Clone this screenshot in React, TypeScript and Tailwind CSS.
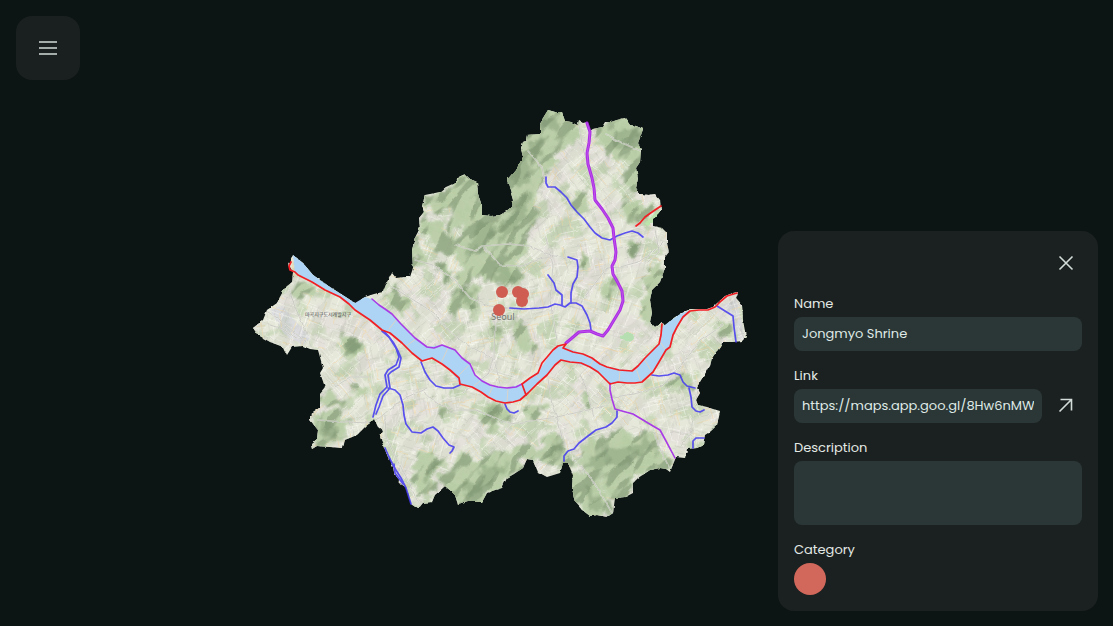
import { useState } from "react";

const BOUNDARY =
  "M548 110L555 112L562 112L565 121L571 122L577 125L578 120L583 123L587 122L590 131L593 129L602 127L605 122L611 122L617 120L625 118L630 125L636 126L643 129L641 135L638 143L641 150L640 162L636 168L638 178L636 188L640 194L648 195L655 194L660 200L661 210L653 220L653 226L662 228L667 233L667 243L669 252L665 257L665 268L660 282L652 290L650 300L652 313L650 322L655 327L662 322L665 326L672 319L680 314L690 309L707 309L713 307L725 296L733 293L738 292L736 298L742 305L743 320L746 337L742 341L733 342L722 342L720 347L712 358L710 366L703 377L697 387L700 393L696 400L698 405L707 407L713 409L720 411L717 425L711 431L705 435L703 445L697 448L687 449L685 458L676 457L670 472L666 469L660 468L650 470L638 478L633 483L633 493L625 497L615 498L613 513L607 517L598 515L590 516L582 510L575 502L572 488L573 475L568 463L563 463L560 473L547 477L538 472L533 460L527 459L523 468L514 474L507 478L502 488L495 490L487 493L482 502L468 502L458 505L455 495L451 491L445 486L435 495L432 502L423 503L418 509L411 504L407 488L401 484L395 477L393 467L388 457L380 437L383 431L378 427L374 419L370 423L366 426L357 435L345 440L343 448L330 447L317 446L312 449L311 445L317 440L318 430L310 420L310 415L320 408L320 393L325 387L320 373L323 368L318 350L310 349L303 346L292 347L287 355L283 347L270 342L258 335L253 328L263 320L267 310L277 303L280 297L285 288L292 282L293 272L288 264L293 255L303 263L313 275L330 287L355 303L365 297L374 294L383 292L387 282L392 273L396 278L405 277L410 277L413 268L412 250L415 238L420 228L419 218L424 212L422 206L425 195L440 192L446 187L455 183L461 176L465 174L470 179L477 182L478 195L482 205L482 215L491 216L500 215L512 208L513 200L510 190L507 180L517 168L523 157L521 149L523 142L526 141L527 135L540 134L540 123Z";

const RIVERS = [
  "M293 255L303 263L313 275L330 287L355 303L365 297L374 300L385 309L400 322L415 338L427 347L442 345L455 350L462 358L470 363L475 375L490 385L507 388L522 384L538 373L548 357L558 346L566 347L580 353L590 357L607 367L632 371L643 360L660 343L662 327L680 314L690 310L677 327L670 347L660 360L653 372L642 382L627 383L610 383L603 377L590 367L570 362L560 361L547 375L528 393L520 400L505 403L488 397L472 387L460 384L450 370L443 365L432 358L422 361L400 342L390 333L382 330L355 310L340 297L312 282L295 272Z",
];

const HILLS = [
  "M538 104L565 104L576 124L577 142L561 150L552 160L544 174L538 190L536 211L528 236L520 260L516 290L500 280L486 284L478 276L466 288L456 277L460 262L450 250L458 234L478 216L498 212L510 206L500 180L518 155L518 136L536 129Z",
  "M456 174L468 168L482 182L487 218L477 224L463 233L450 224L453 208L448 192Z",
  "M424 196L448 190L452 202L440 211L424 210Z",
  "M418 213L436 217L452 238L459 252L449 260L436 246L420 236Z",
  "M410 240L420 246L424 262L414 270Z",
  "M594 128L611 118L630 115L647 128L643 150L645 167L638 192L626 184L628 160L615 160L607 150L598 144Z",
  "M630 200L652 203L657 214L648 228L635 224L622 215Z",
  "M575 192L588 193L590 208L579 214L572 203Z",
  "M583 252L592 257L587 270L576 269Z",
  "M628 240L640 242L636 255L625 251Z",
  "M662 258L662 283L655 296L655 325L642 323L637 311L645 296L648 274Z",
  "M607 281L614 285L607 297L601 293Z",
  "M460 280L478 289L474 312L462 310L452 316L452 295Z",
  "M440 266L450 268L452 280L442 284Z",
  "M515 322L528 330L532 352L521 347L510 335Z",
  "M490 318L500 326L496 340L488 330Z",
  "M394 304L384 293L391 286L401 294L410 303L407 315L395 311Z",
  "M297 280L310 278L316 291L303 301L293 294Z",
  "M341 333L357 337L362 351L350 359L344 348Z",
  "M324 389L337 392L344 410L330 410L318 402Z",
  "M349 382L364 386L355 398Z",
  "M325 411L349 418L343 441L316 446L311 418Z",
  "M483 408L500 402L510 412L501 428L486 426L473 418Z",
  "M434 402L443 404L451 413L441 419Z",
  "M420 456L436 448L441 463L437 486L419 498L412 477L417 465Z",
  "M450 464L462 452L476 462L495 453L516 453L520 469L508 480L504 490L486 497L480 506L457 508L451 492L440 480Z",
  "M520 440L535 448L548 436L566 440L569 461L549 467L530 462L508 456L515 446Z",
  "M566 464L581 450L594 439L613 434L637 431L654 438L665 452L670 468L644 472L633 484L627 499L609 499L601 481L581 463Z",
  "M570 476L590 468L602 486L613 516L593 520L571 502Z",
  "M677 375L690 376L698 391L682 395L668 387Z",
  "M718 321L730 322L733 339L716 341Z",
  "M532 405L544 410L536 421L527 414Z",
  "M586 389L592 398L586 404L580 399Z",
];

const SHADOWS = [
  "M512 172L531 156L528 182L517 189Z",
  "M508 216L531 190L527 216L506 238L495 250L498 230Z",
  "M542 114L553 111L562 119L556 138L544 131Z",
  "M528 142L545 138L541 156L532 160Z",
  "M609 137L622 130L637 128L631 146L618 151Z",
  "M474 233L485 222L496 224L482 249L465 260Z",
  "M580 470L607 450L633 445L648 440L644 454L621 461L598 470Z",
  "M586 486L603 497L603 513L590 507Z",
  "M460 483L473 480L485 470L504 459L503 474L484 488L465 498Z",
  "M484 416L496 406L502 414L492 422Z",
  "M426 469L434 459L439 474L427 483Z",
  "M490 276L502 264L512 280L500 288Z",
  "M544 451L558 441L565 450L553 457Z",
  "M462 290L472 290L472 305L462 304Z",
  "M326 419L338 425L334 437L322 434Z",
  "M443 268L449 270L448 282L442 278Z",
  "M345 340L356 338L358 350L350 354Z",
  "M629 243L638 243L634 253L627 251Z",
  "M582 255L590 258L584 269L578 268Z",
];

const MAIN_ROADS = [
  "M392 287L412 299L434 313L447 329L464 343L493 359L488 374L463 393",
  "M495 315L494 359L500 384",
  "M415 260L433 265L455 280L470 298L489 306L520 309",
  "M456 245L475 251L482 246L508 244L530 246L548 254L566 259",
  "M606 134L622 143L641 151",
  "M579 125L582 143L588 168L592 190",
  "M581 302L593 286L607 268L620 267L638 262L651 254L663 242",
  "M528 151L542 167L545 185",
  "M371 425L390 409L407 397L427 388",
  "M385 415L386 437L396 458L409 482L417 501",
  "M318 420L343 422L371 423",
  "M289 289L295 307L307 334",
  "M268 312L279 319L295 333L306 342",
  "M270 325L283 329L298 339",
  "M548 379L552 405L558 420L562 438",
  "M580 374L587 390L594 417",
  "M573 459L585 470L598 489L612 513",
  "M654 433L660 449L669 467",
  "M698 388L694 414L690 434L681 446",
  "M607 398L634 394L662 386L680 367L700 341L723 325",
  "M424 392L438 404L455 410L476 410L510 424L557 417L605 406",
  "M655 229L659 252L648 262",
  "M335 387L350 377L371 377",
  "M546 238L553 265L550 300L557 340",
  "M484 247L500 265L521 266L543 258",
];

const BLUE_STREAMS = [
  "M546 177L546 183L548 187L555 187L561 192L567 198L571 205L577 212L584 219L590 227L595 233L602 238L610 240L617 236L625 233L632 231L638 233L643 237",
  "M510 308L524 309L539 308L548 307L555 304L560 305L565 307L570 303L576 303L582 306L587 315L590 323L591 330",
  "M571 303L571 293L573 284L577 277L578 267L577 260L568 257",
  "M562 305L562 295L556 290L554 283L548 275",
  "M382 331L389 337L396 348L399 357L396 365L388 370L385 375L387 387L380 394L376 405L373 417",
  "M384 331L393 342L398 351L401 358L399 367L391 372L388 375L390 388L383 396L379 407L376 414",
  "M388 388L395 390L400 395L403 405L404 415L406 424L412 432L421 433L427 429L433 427L438 431L443 438L449 445L454 447L452 451L450 453",
  "M421 362L425 372L430 380L436 386L444 388L453 388L460 385",
  "M385 448L389 457L394 467L401 478L406 488L411 504",
  "M394 464L395 473L403 484",
  "M505 404L507 409L510 412L514 413L518 411",
  "M564 461L564 456L568 451L574 449L579 443L588 436L596 430L606 427L612 423L617 417L617 411",
  "M652 375L659 376L668 375L674 373L680 375L683 382L687 386L695 388",
  "M689 388L691 397L692 407L696 411L700 412L704 410",
  "M693 448L693 441L696 438L704 438",
  "M717 306L725 311L733 316L734 327L736 342",
];

const MAIN_TRIBUTARY =
  "M587 123L590 132L589 143L587 153L588 164L592 178L594 188L595 200L602 209L608 218L613 228L614 238L616 252L615 260L612 266L613 274L618 283L622 291L623 301L620 310L614 320L608 330L603 336L597 334L590 331L579 332L572 338L566 343";

const PURPLE_STREAMS = [
  "M610 383L610 390L612 399L615 409L622 411L633 414L643 420L653 426L660 430L666 441L675 458",
  "M372 299L379 305L385 309L392 314L401 324L415 338L427 347L434 348L442 345L455 350L462 358L470 364L475 375L482 381L490 385L498 387L507 388L516 387L522 384",
];

const RED_BANKS = [
  "M291 262L289 266L290 270L295 272L298 275L312 282L325 290L340 297L349 304L355 310L370 320L382 330L390 333L402 343L412 353L422 361L432 358L442 364L450 370L459 378L460 384L472 387L481 392L488 397L496 401L505 403L513 402L520 400L528 393L537 384L547 375L555 365L561 360L570 362L581 363L590 367L598 372L604 378L610 384L618 382L627 383L635 383L642 382L653 372L659 362L666 350L670 347L673 335L677 327L683 317L690 311L699 310L708 310L715 307L721 301L727 296L737 293",
  "M526 395L522 384L530 378L538 373L542 363L548 356L553 350L558 346L566 344L563 348L573 352L583 354L592 358L600 364L607 367L619 370L632 371L638 366L645 358L653 350L659 344L661 335L662 324",
  "M636 226L640 223L645 217L652 212L661 206",
];

const MARKERS = [
  { x: 502, y: 292 },
  { x: 518, y: 292 },
  { x: 523, y: 294 },
  { x: 522, y: 301 },
  { x: 499, y: 310 },
];

/** Short street segments on a slightly jittered, slanted grid. */
function streets(step: number, seed: number) {
  let s = seed;
  const next = () => {
    s = (s * 16807) % 2147483647;
    return s / 2147483647;
  };
  let d = "";
  for (let y = 110; y < 520; y += step) {
    for (let x = 250; x < 750; x += step) {
      const px = x + next() * step;
      const py = y + next() * step;
      const len = 6 + next() * 16;
      const a = (Math.floor(x / 90) + Math.floor(y / 70)) * 0.5 + (next() > 0.5 ? Math.PI / 2 : 0);
      d += `M${px.toFixed(1)} ${py.toFixed(1)}l${(Math.cos(a) * len).toFixed(1)} ${(Math.sin(a) * len).toFixed(1)}`;
    }
  }
  return d;
}

const MINOR = streets(10, 71);
const LIGHT = streets(9, 4021);
const WARM = streets(16, 913);

function SeoulMap() {
  return (
    <svg
      className="absolute inset-0 h-full w-full"
      viewBox="0 0 1113 626"
      preserveAspectRatio="xMidYMid slice"
      role="img"
      aria-label="Map of Seoul"
      fill="none"
      strokeLinejoin="round"
      strokeLinecap="round"
    >
      <defs>
        <clipPath id="city">
          <path d={BOUNDARY} />
        </clipPath>
        <filter id="rough" x="-5%" y="-5%" width="110%" height="110%" colorInterpolationFilters="sRGB">
          <feTurbulence type="fractalNoise" baseFrequency="0.07" numOctaves="3" seed="4" result="n" />
          <feDisplacementMap in="SourceGraphic" in2="n" scale="22" xChannelSelector="R" yChannelSelector="G" />
          <feGaussianBlur stdDeviation="1.1" />
        </filter>
        <filter id="edge" x="-5%" y="-5%" width="110%" height="110%" colorInterpolationFilters="sRGB">
          <feTurbulence type="fractalNoise" baseFrequency="0.16" numOctaves="2" seed="9" result="n" />
          <feDisplacementMap in="SourceGraphic" in2="n" scale="3" xChannelSelector="R" yChannelSelector="G" />
          <feGaussianBlur stdDeviation="0.4" />
        </filter>
        <filter id="patches" x="0" y="0" width="100%" height="100%" colorInterpolationFilters="sRGB">
          <feTurbulence type="fractalNoise" baseFrequency="0.05" numOctaves="3" seed="12" />
          <feColorMatrix values="0 0 0 0 0.74  0 0 0 0 0.82  0 0 0 0 0.67  7 0 0 0 -3.7" />
        </filter>
        <filter id="tint" x="0" y="0" width="100%" height="100%" colorInterpolationFilters="sRGB">
          <feTurbulence type="fractalNoise" baseFrequency="0.035" numOctaves="2" seed="31" />
          <feColorMatrix values="0 0 0 0 0.89  0 0 0 0 0.87  0 0 0 0 0.86  0 6 0 0 -2.8" />
        </filter>
        <filter id="relief" x="0" y="0" width="100%" height="100%" colorInterpolationFilters="sRGB">
          <feTurbulence type="fractalNoise" baseFrequency="0.03 0.065" numOctaves="2" seed="7" />
          <feColorMatrix values="0 0 0 0 0  0 0 0 0 0  0 0 0 0 0  1 0 0 0 0" />
          <feGaussianBlur stdDeviation="0.8" />
          <feDiffuseLighting surfaceScale="26" diffuseConstant="1.15" lightingColor="#ffffff">
            <feDistantLight azimuth="260" elevation="55" />
          </feDiffuseLighting>
          <feColorMatrix values="0 0 0 0 0.42  0 0 0 0 0.5  0 0 0 0 0.38  -1.6 0 0 0 1.4" />
        </filter>
        <mask id="hillMask">
          <g fill="#ffffff" filter="url(#rough)">
            {HILLS.map((d) => (
              <path key={d} d={d} />
            ))}
          </g>
        </mask>
      </defs>

      <g filter="url(#edge)">
        <g clipPath="url(#city)">
          <rect x="240" y="100" width="520" height="430" fill="#e6e8da" />
          <rect x="240" y="100" width="520" height="430" filter="url(#tint)" opacity="0.7" />
          <rect x="240" y="100" width="520" height="430" filter="url(#patches)" opacity="0.65" />
          <g fill="#d9d9df" opacity="0.8">
            <path d="M270 310L282 306L310 337L303 345L284 334Z" />
            <path d="M722 305L736 300L742 322L744 339L734 340L733 317Z" />
          </g>
          <path d={MINOR} stroke="#bdbdb4" strokeWidth="0.5" opacity="0.5" />
          <path d={LIGHT} stroke="#fbfaf4" strokeWidth="0.8" opacity="0.6" />
          <path d={WARM} stroke="#efd9ae" strokeWidth="0.9" opacity="0.7" />
          <g fill="#b4cba2" opacity="0.85" filter="url(#rough)">
            {HILLS.map((d) => (
              <path key={d} d={d} />
            ))}
          </g>
          <g fill="#849d78" opacity="0.5" filter="url(#rough)">
            {SHADOWS.map((d) => (
              <path key={d} d={d} />
            ))}
          </g>
          <g transform="rotate(-48 500 313)" opacity="0.08">
            <rect x="160" y="-40" width="700" height="700" filter="url(#relief)" />
          </g>
          <g mask="url(#hillMask)">
            <g transform="rotate(-48 500 313)" opacity="0.36">
              <rect x="160" y="-40" width="700" height="700" filter="url(#relief)" />
            </g>
          </g>
          <ellipse cx="627" cy="337" rx="7" ry="4" fill="#b5dfb0" />
          <path d="M662 210L660 217L648 226L644 224L655 213Z" fill="#bce3ac" />
          <g stroke="#eeefe8" strokeWidth="1.6" opacity="0.7">
            {MAIN_ROADS.map((d) => (
              <path key={d} d={d} />
            ))}
          </g>
          <g stroke="#96948f" strokeWidth="0.6" opacity="0.6">
            {MAIN_ROADS.map((d) => (
              <path key={d} d={d} />
            ))}
          </g>
        </g>
      </g>

      <g fill="#add4f4">
        {RIVERS.map((d) => (
          <path key={d} d={d} />
        ))}
      </g>
      <path
        d="M389 329L397 319M406 346L416 339M441 363L448 348M459 375L468 366M474 386L480 381M489 395L493 386M507 402L508 389M541 379L536 375M590 366L594 359M619 382L620 371M640 380L636 368M651 371L645 360M665 349L661 343"
        stroke="#d9d3c8"
        strokeWidth="1"
      />
      <g stroke="#4238f2" strokeWidth="1.7" opacity="0.85">
        {BLUE_STREAMS.map((d) => (
          <path key={d} d={d} />
        ))}
      </g>
      <g stroke="#a93be6" strokeWidth="1.6">
        {PURPLE_STREAMS.map((d) => (
          <path key={d} d={d} />
        ))}
      </g>
      <path d={MAIN_TRIBUTARY} stroke="#ad2be6" strokeWidth="3" />
      <path d={MAIN_TRIBUTARY} stroke="#c264e8" strokeWidth="0.7" />
      <g stroke="#f21f24" strokeWidth="1.7">
        {RED_BANKS.map((d) => (
          <path key={d} d={d} />
        ))}
      </g>

      <text x="328" y="316" textAnchor="middle" className="fill-[#45484a] font-['Noto_Sans_CJK_KR',sans-serif] text-[5px]">
        마곡지구도시개발지구
      </text>
      <text x="503" y="320" textAnchor="middle" className="fill-[#73756f] font-['Noto_Sans',sans-serif] text-[9px]">
        Seoul
      </text>

      <g fill="#cf5d52">
        {MARKERS.map((m) => (
          <circle key={`${m.x}-${m.y}`} cx={m.x} cy={m.y} r="6" />
        ))}
      </g>
    </svg>
  );
}

const LABEL = "text-[13px] leading-5";
const FIELD = "block rounded-lg bg-[#2b3736] px-2 text-[13px] leading-5 text-[#dfe9e6] outline-none";

export default function App() {
  const [name, setName] = useState("Jongmyo Shrine");
  const [link, setLink] = useState("https://maps.app.goo.gl/8Hw6nMWX");
  const [description, setDescription] = useState("");

  return (
    <main className="relative min-h-screen overflow-hidden bg-[#0d1514] font-[Poppins,Inter,sans-serif] text-[#e3e9e6]">
      <SeoulMap />

      <button
        type="button"
        aria-label="Menu"
        className="absolute top-4 left-4 flex size-16 items-center justify-center rounded-2xl bg-[#1a201f]"
      >
        <svg className="size-6" viewBox="0 0 24 24" stroke="#d3dcd9" strokeWidth="1.7" aria-hidden="true">
          <path d="M3 6h18M3 12h18M3 18h18" />
        </svg>
      </button>

      <form className="absolute right-[15px] bottom-[15px] flex w-80 flex-col gap-[15px] rounded-2xl bg-[#1b2120] p-4">
        <button type="button" aria-label="Close" className="flex size-8 items-center justify-center self-end">
          <svg className="size-6" viewBox="0 0 24 24" stroke="#d3dcd9" strokeWidth="1.6" aria-hidden="true">
            <path d="M5.5 5.5l13 13M18.5 5.5l-13 13" />
          </svg>
        </button>

        <div className="flex flex-col gap-[3px]">
          <label htmlFor="name" className={LABEL}>
            Name
          </label>
          <input id="name" type="text" value={name} onChange={(e) => setName(e.target.value)} className={`${FIELD} h-[34px] w-full`} />
        </div>

        <div className="flex flex-col gap-[3px]">
          <label htmlFor="link" className={LABEL}>
            Link
          </label>
          <div className="flex items-center gap-2">
            <input
              id="link"
              type="url"
              value={link}
              onChange={(e) => setLink(e.target.value)}
              className={`${FIELD} h-[34px] min-w-0 flex-1`}
            />
            <a href={link} aria-label="Open link" className="flex size-8 items-center justify-center">
              <svg className="size-6" viewBox="0 0 24 24" fill="none" stroke="#d3dcd9" strokeWidth="1.6" aria-hidden="true">
                <path d="M5.5 17.5L17.5 5.5M6.5 5.5h11v11" />
              </svg>
            </a>
          </div>
        </div>

        <div className="flex flex-col gap-[3px]">
          <label htmlFor="description" className={LABEL}>
            Description
          </label>
          <textarea
            id="description"
            value={description}
            onChange={(e) => setDescription(e.target.value)}
            className={`${FIELD} h-16 w-full resize-none py-2`}
          />
        </div>

        <div className="flex flex-col gap-[3px]">
          <span id="category" className={LABEL}>
            Category
          </span>
          <button type="button" aria-labelledby="category" className="size-8 rounded-full bg-[#d1685b]" />
        </div>
      </form>
    </main>
  );
}
